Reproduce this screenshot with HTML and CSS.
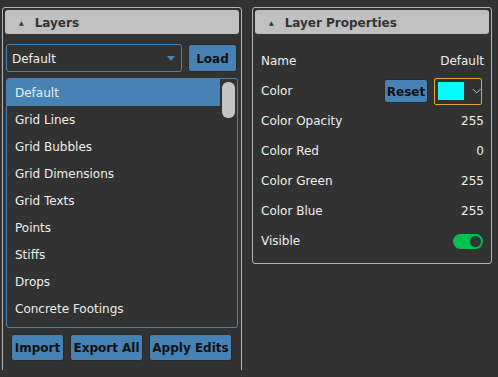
FILE: index.html
```html
<!DOCTYPE html>
<html>
<head>
<meta charset="utf-8"/>
<link rel="stylesheet" href="styles.css">
</head>
<body>

<div class="panel layers">
  <div class="phead"><span class="caret">&#9650;</span>Layers</div>

  <div class="pickrow">
    <div class="select">Default<span class="arrow"></span></div>
    <button class="btn load">Load</button>
  </div>

  <div class="list">
    <div class="items">
      <div class="item sel">Default</div>
      <div class="item">Grid Lines</div>
      <div class="item">Grid Bubbles</div>
      <div class="item">Grid Dimensions</div>
      <div class="item">Grid Texts</div>
      <div class="item">Points</div>
      <div class="item">Stiffs</div>
      <div class="item">Drops</div>
      <div class="item">Concrete Footings</div>
    </div>
    <div class="scroll"><div class="thumb"></div></div>
  </div>

  <div class="actions">
    <button class="btn imp">Import</button>
    <button class="btn exp">Export All</button>
    <button class="btn app">Apply Edits</button>
  </div>
</div>

<div class="panel props">
  <div class="phead"><span class="caret">&#9650;</span>Layer Properties</div>
  <div class="rows">
    <div class="row"><span>Name</span><span>Default</span></div>
    <div class="row"><span>Color</span>
      <span class="colorctl">
        <button class="btn reset">Reset</button>
        <span class="picker"><span class="swatch"></span>
          <svg width="10" height="6" viewBox="0 0 10 6"><path d="M1 1 L5 5 L9 1" fill="none" stroke="#ccc" stroke-width="1"/></svg>
        </span>
      </span>
    </div>
    <div class="row"><span>Color Opacity</span><span>255</span></div>
    <div class="row"><span>Color Red</span><span>0</span></div>
    <div class="row"><span>Color Green</span><span>255</span></div>
    <div class="row"><span>Color Blue</span><span>255</span></div>
    <div class="row"><span>Visible</span><span class="toggle"><span class="knob"></span></span></div>
  </div>
</div>

</body>
</html>
```

FILE: styles.css
```css
body {
  margin: 0px;
  padding: 7px 0 0 2px;
  background: #323232;
  font-family: "DejaVu Sans", Verdana, sans-serif;
  font-size: 12px;
  color: #eeeeee;
  display: flex;
  align-items: flex-start;
  gap: 10px;
  height: 370px;
  box-sizing: border-box;
  overflow: hidden;
}

.panel {
  border: 1px solid #b4b4b4;
  border-radius: 3px;
  padding: 2px;
  box-sizing: border-box;
}

.layers {
  width: 240px;
  height: 368px;
}

.props {
  width: 240px;
  height: 257px;
}

.phead {
  background: #c0c0c0;
  color: #333;
  font-weight: bold;
  font-size: 12px;
  height: 24px;
  line-height: 25px;
  border-radius: 3px;
  padding-left: 14px;
}

.caret {
  font-size: 6px;
  vertical-align: 2px;
  margin-right: 11px;
}

.btn {
  background: #4682b4;
  border: 1px solid #2a2a2a;
  border-radius: 3px;
  color: #111;
  font-family: "DejaVu Sans", Verdana, sans-serif;
  font-weight: bold;
  font-size: 12px;
  padding: 1px 0 0 0;
  margin: 0;
}

.pickrow {
  display: flex;
  gap: 6px;
  margin: 10px 2px 0 1px;
  height: 28px;
}

.select {
  flex: 1;
  border: 1px solid #4682b4;
  border-radius: 3px;
  padding-left: 5px;
  line-height: 28px;
  position: relative;
}

.arrow {
  position: absolute;
  right: 6px;
  top: 11px;
  border-left: 4px solid transparent;
  border-right: 4px solid transparent;
  border-top: 5px solid #4682b4;
}

.load {
  width: 49px;
}

.list {
  margin: 6px 1px 0 1px;
  height: 250px;
  border: 1px solid #4682b4;
  border-radius: 3px;
  box-sizing: border-box;
  display: flex;
  overflow: hidden;
}

.items {
  flex: 1;
}

.item {
  height: 27px;
  line-height: 29px;
  padding-left: 8px;
}

.item.sel {
  background: #4682b4;
}

.scroll {
  width: 17px;
  padding: 3px 2px 0 2px;
  box-sizing: border-box;
}

.thumb {
  height: 36px;
  background: #c4c4c4;
  border-radius: 6px;
}

.actions {
  display: flex;
  gap: 6px;
  margin: 6px 0 0 6px;
  height: 27px;
}

.imp { width: 53px; }
.exp { width: 73px; }
.app { width: 83px; }

.rows {
  padding: 12px 5px 0 6px;
}

.row {
  display: flex;
  justify-content: space-between;
  align-items: center;
  height: 30px;
}

.colorctl {
  display: flex;
  align-items: center;
  gap: 6px;
  margin-right: 2px;
}

.reset {
  width: 44px;
  height: 24px;
}

.picker {
  display: flex;
  align-items: center;
  gap: 8px;
  border: 1px solid #e8a33a;
  border-radius: 2px;
  width: 48px;
  height: 27px;
  box-sizing: border-box;
  padding-left: 3px;
}

.swatch {
  width: 27px;
  height: 18px;
  background: #00ffff;
}

.toggle {
  width: 30px;
  height: 15px;
  border-radius: 8px;
  background: #00c050;
  display: flex;
  justify-content: flex-end;
  align-items: center;
  padding-right: 2px;
  box-sizing: border-box;
  margin-right: 1px;
}

.knob {
  width: 11px;
  height: 11px;
  border-radius: 50%;
  background: #333;
}
```
